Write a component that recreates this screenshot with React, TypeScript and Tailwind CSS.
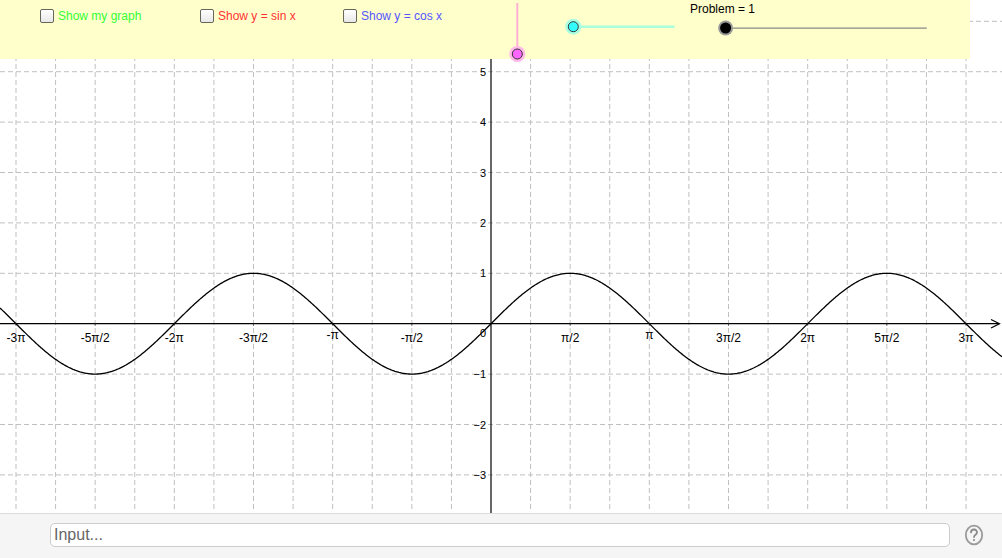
import React from 'react';

const OX = 491;
const OY = 323.7;
const S = 50.4;
const W = 1002;
const H = 513;

const xLabels: Record<number, string> = {
    [-6]: '-3π',
    [-5]: '-5π/2',
    [-4]: '-2π',
    [-3]: '-3π/2',
    [-2]: '-π',
    [-1]: '-π/2',
    1: 'π/2',
    2: 'π',
    3: '3π/2',
    4: '2π',
    5: '5π/2',
    6: '3π',
};

function sinePath() {
    const pts: string[] = [];
    for (let px = 0; px <= W; px += 1) {
        const y = OY - S * Math.sin((px - OX) / S);
        pts.push(`${px === 0 ? 'M' : 'L'}${px},${y.toFixed(2)}`);
    }
    return pts.join(' ');
}

function Graph() {
    const vGrid = Array.from({ length: 25 }, (_, i) => i - 12).filter((k) => k !== 0);
    const hGrid = [-3, -2, -1, 1, 2, 3, 4, 5, 6];

    return (
        <svg width={W} height={H} className="block font-['Liberation_Sans',Arial,sans-serif]">
            {/* grid */}
            {vGrid.map((k) => {
                const x = OX + (k * Math.PI * S) / 4;
                return (
                    <line key={`v${k}`} x1={x} y1={0} x2={x} y2={510} stroke="#c0c0c0" strokeWidth={1} strokeDasharray="5 3" />
                );
            })}
            {hGrid.map((j) => {
                const y = OY - j * S;
                return (
                    <line key={`h${j}`} x1={0} y1={y} x2={W} y2={y} stroke="#c0c0c0" strokeWidth={1} strokeDasharray="5 3" />
                );
            })}

            {/* axes */}
            <line x1={0} y1={OY} x2={999} y2={OY} stroke="#000" strokeWidth={1.2} />
            <polyline points={`991,319.5 999.5,${OY} 991,328`} fill="none" stroke="#000" strokeWidth={1.2} />
            <line x1={OX} y1={0} x2={OX} y2={H} stroke="#000" strokeWidth={1.2} />

            {Object.keys(xLabels).map((key) => {
                const k = Number(key);
                const x = OX + (k * Math.PI * S) / 2;
                const isPi = k === 2 || k === -2;
                return (
                    <g key={`xl${k}`}>
                        <line x1={x} y1={OY} x2={x} y2={OY + 2} stroke="#444" strokeWidth={1} />
                        <text x={x} y={isPi ? 339 : 342} fontSize={12} textAnchor="middle" fill="#000">
                            {xLabels[k]}
                        </text>
                    </g>
                );
            })}

            {hGrid.map((j) => {
                const y = OY - j * S;
                return (
                    <g key={`yl${j}`}>
                        <text x={486} y={y + 4} fontSize={11} textAnchor="end" fill="#000">
                            {j < 0 ? `−${-j}` : j}
                        </text>
                    </g>
                );
            })}
            <text x={480} y={337} fontSize={11} fill="#000">0</text>

            {/* y = sin x */}
            <path d={sinePath()} fill="none" stroke="#000" strokeWidth={1.3} />
        </svg>
    );
}

function Checkbox({ label, color, width }: { label: string; color: string; width: string }) {
    return (
        <div className={`flex items-center ${width}`}>
            <span className="w-[14px] h-[14px] rounded-[2px] border-[1.5px] border-[#66665a] bg-linear-to-b from-white to-[#e8e8e8]" />
            <span className={`ml-[4px] text-[12px] leading-[14px] ${color}`}>{label}</span>
        </div>
    );
}

function Sliders() {
    return (
        <svg width={W} height={70} className="absolute left-0 top-0 pointer-events-none">
            {/* vertical pink slider */}
            <line x1={517.3} y1={3} x2={517.3} y2={54} stroke="#ffb0d4" strokeWidth={2} />
            <circle cx={517.3} cy={54} r={8} fill="#ffb8e8" />
            <circle cx={517.3} cy={54} r={5} fill="#ff66ff" stroke="#333" strokeWidth={1} />

            {/* cyan slider */}
            <line x1={573.3} y1={26.7} x2={674.5} y2={26.7} stroke="#a8ffdc" strokeWidth={2.5} />
            <circle cx={573.3} cy={26.7} r={8} fill="#a8ffe2" />
            <circle cx={573.3} cy={26.7} r={5} fill="#33ffff" stroke="#333" strokeWidth={1} />

            {/* Problem slider */}
            <line x1={725.6} y1={28.2} x2={926.7} y2={28.2} stroke="#888" strokeWidth={1.3} />
            <circle cx={725.6} cy={28} r={7.5} fill="#999" />
            <circle cx={725.6} cy={28} r={5.5} fill="#000" />
        </svg>
    );
}

function HelpIcon() {
    return (
        <svg width={20} height={22} viewBox="0 0 20 22" className="block">
            <ellipse cx={10} cy={11} rx={8.2} ry={9.4} fill="none" stroke="#9a9a9a" strokeWidth={1.8} />
            <path d="M7 8.4a3 3 0 0 1 6 .2c0 2-3 2.2-3 4.4" fill="none" stroke="#8a8a8a" strokeWidth={1.8} strokeLinecap="round" />
            <circle cx={10} cy={16} r={1.1} fill="#8a8a8a" />
        </svg>
    );
}

export default function App() {
    return (
        <div className="w-[1002px] h-[558px] bg-white overflow-hidden font-['Liberation_Sans',Arial,sans-serif]">
            <div className="relative h-[513px] overflow-hidden">
                <Graph />

                <div className="absolute left-0 top-0 w-[970px] h-[59px] bg-[#ffffcc]">
                    <div className="flex pl-[40px] pt-[9px]">
                        <Checkbox label="Show my graph" color="text-[#33ff33]" width="w-[160px]" />
                        <Checkbox label="Show y = sin x" color="text-[#ff3333]" width="w-[143px]" />
                        <Checkbox label="Show y = cos x" color="text-[#5555ff]" width="w-[120px]" />
                    </div>
                </div>

                <Sliders />
                <div className="absolute left-[690px] top-[2px] text-[12px] leading-[14px] text-black">Problem = 1</div>
            </div>

            <div className="h-[45px] border-t border-[#dddddd] bg-[#f5f5f5] flex items-start pt-[9px] pl-[50px]">
                <input
                    placeholder="Input..."
                    className="w-[900px] h-[24px] rounded-[5px] border border-[#cccccc] bg-white px-[3px] text-[16px] text-[#333] placeholder:text-[#666] outline-none font-['Liberation_Sans',Arial,sans-serif]"
                />
                <div className="ml-[14px] mt-[1px]">
                    <HelpIcon />
                </div>
            </div>
        </div>
    );
}
